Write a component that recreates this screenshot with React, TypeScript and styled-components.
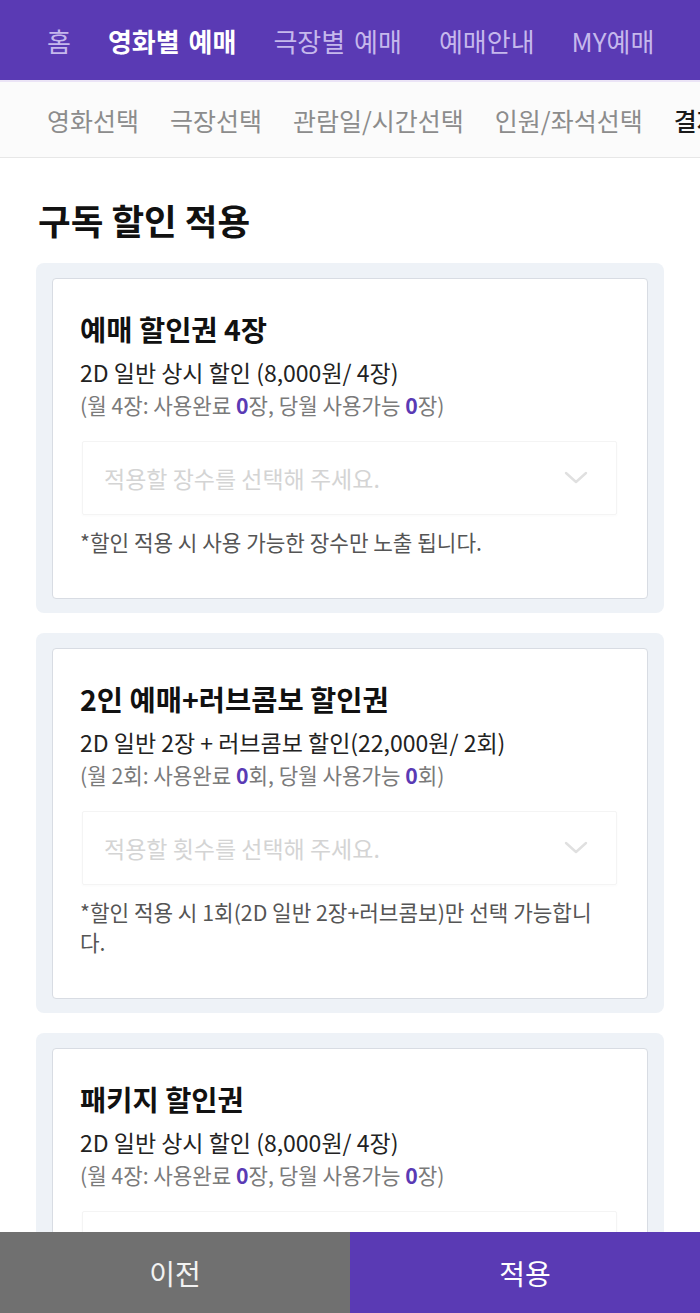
import React from "react";
import styled, { createGlobalStyle } from "styled-components";

const PURPLE = "#5a3ab4";

const GlobalStyle = createGlobalStyle`
  html, body {
    margin: 0;
    padding: 0;
    background: #ffffff;
    font-family: "Noto Sans CJK KR", "Noto Sans", sans-serif;
    color: #111;
  }
  * {
    box-sizing: border-box;
  }
`;

type Coupon = {
  title: string;
  desc: string;
  monthly: string;
  unit: string;
  placeholder: string;
  note: React.ReactNode;
};

const coupons: Coupon[] = [
  {
    title: "예매 할인권 4장",
    desc: "2D 일반 상시 할인 (8,000원/ 4장)",
    monthly: "월 4장",
    unit: "장",
    placeholder: "적용할 장수를 선택해 주세요.",
    note: "*할인 적용 시 사용 가능한 장수만 노출 됩니다.",
  },
  {
    title: "2인 예매+러브콤보 할인권",
    desc: "2D 일반 2장 + 러브콤보 할인(22,000원/ 2회)",
    monthly: "월 2회",
    unit: "회",
    placeholder: "적용할 횟수를 선택해 주세요.",
    note: (
      <>
        *할인 적용 시 1회(2D 일반 2장+러브콤보)만 선택 가능합니
        <br />
        다.
      </>
    ),
  },
  {
    title: "패키지 할인권",
    desc: "2D 일반 상시 할인 (8,000원/ 4장)",
    monthly: "월 4장",
    unit: "장",
    placeholder: "적용할 장수를 선택해 주세요.",
    note: "*할인 적용 시 사용 가능한 장수만 노출 됩니다.",
  },
];

const menus = ["홈", "영화별 예매", "극장별 예매", "예매안내", "MY예매"];
const steps = ["영화선택", "극장선택", "관람일/시간선택", "인원/좌석선택", "결제"];

function App() {
  return (
    <>
      <GlobalStyle />
      <TopNav>
        {menus.map((m) => (
          <NavItem key={m} $active={m === "영화별 예매"}>
            {m}
          </NavItem>
        ))}
      </TopNav>
      <StepBar>
        {steps.map((s) => (
          <Step key={s} $current={s === "결제"}>
            {s}
          </Step>
        ))}
      </StepBar>

      <Main>
        <PageTitle>구독 할인 적용</PageTitle>
        <CouponList>
          {coupons.map((c) => (
            <CouponBox key={c.title}>
              <Card>
                <CardTitle>{c.title}</CardTitle>
                <Desc>{c.desc}</Desc>
                <Usage>
                  ({c.monthly}: 사용완료 <Count>0</Count>
                  {c.unit}, 당월 사용가능 <Count>0</Count>
                  {c.unit})
                </Usage>
                <Select>
                  <Placeholder>{c.placeholder}</Placeholder>
                  <svg width="24" height="14" viewBox="0 0 24 14">
                    <polyline
                      points="2,2 12,11 22,2"
                      fill="none"
                      stroke="#e0e0e0"
                      strokeWidth="2.4"
                      strokeLinecap="round"
                      strokeLinejoin="round"
                    />
                  </svg>
                </Select>
                <Note>{c.note}</Note>
              </Card>
            </CouponBox>
          ))}
        </CouponList>
      </Main>

      <BottomBar>
        <BottomButton $primary={false}>이전</BottomButton>
        <BottomButton $primary>적용</BottomButton>
      </BottomBar>
    </>
  );
}

const TopNav = styled.nav`
  height: 80px;
  background: ${PURPLE};
  display: flex;
  align-items: center;
  gap: 37px;
  padding-left: 47px;
  white-space: nowrap;
  overflow: hidden;
  box-shadow: 0 2px 0 #ebe4f6;
  position: relative;
  z-index: 1;
`;

const NavItem = styled.span<{ $active: boolean }>`
  font-size: 26px;
  word-spacing: 3px;
  color: ${(p) => (p.$active ? "#ffffff" : "#c5b8ec")};
  font-weight: ${(p) => (p.$active ? 700 : 400)};
`;

const StepBar = styled.div`
  height: 78px;
  background: #fbfbfb;
  border-bottom: 1px solid #e7e7e7;
  display: flex;
  align-items: center;
  gap: 31px;
  padding: 2px 0 0 47px;
  white-space: nowrap;
  overflow: hidden;
`;

const Step = styled.span<{ $current: boolean }>`
  font-size: 25px;
  color: ${(p) => (p.$current ? "#1a1a1a" : "#8c8c8c")};
  font-weight: ${(p) => (p.$current ? 500 : 400)};
`;

const Main = styled.main`
  padding: 0 36px 120px;
`;

const PageTitle = styled.h1`
  margin: 40px 0 21px;
  padding-left: 2px;
  font-size: 35.5px;
  line-height: 44px;
  font-weight: 700;
  color: #111;
`;

const CouponList = styled.div`
  display: flex;
  flex-direction: column;
  gap: 20px;
`;

const CouponBox = styled.section`
  background: #eef2f7;
  border-radius: 8px;
  padding: 15px 16px 14px;
`;

const Card = styled.div`
  background: #ffffff;
  border: 1px solid #d8dce3;
  border-radius: 4px;
  padding: 32px 30px 41px 27px;
`;

const CardTitle = styled.h2`
  margin: 0;
  font-size: 28.5px;
  line-height: 36px;
  font-weight: 700;
  color: #111;
`;

const Desc = styled.p`
  margin: 10px 0 0;
  font-size: 23px;
  line-height: 30px;
  color: #222;
`;

const Usage = styled.p`
  margin: 4px 0 0;
  font-size: 21.2px;
  line-height: 28px;
  color: #7a7a7a;
`;

const Count = styled.b`
  color: ${PURPLE};
  font-weight: 700;
`;

const Select = styled.div`
  margin: 22px 0 0 2px;
  height: 74px;
  border: 1px solid #f4f4f4;
  border-radius: 2px;
  box-shadow: 0 1px 3px rgba(0, 0, 0, 0.025);
  display: flex;
  align-items: center;
  justify-content: space-between;
  padding: 0 28px 0 21px;
`;

const Placeholder = styled.span`
  font-size: 23px;
  color: #d4d4d4;
`;

const Note = styled.p`
  margin: 12px 0 0;
  font-size: 21.3px;
  line-height: 30px;
  color: #555;
  white-space: nowrap;
`;

const BottomBar = styled.footer`
  position: fixed;
  left: 0;
  right: 0;
  bottom: 0;
  height: 81px;
  display: grid;
  grid-template-columns: 1fr 1fr;
  z-index: 5;
`;

const BottomButton = styled.button<{ $primary: boolean }>`
  border: none;
  margin: 0;
  background: ${(p) => (p.$primary ? PURPLE : "#707070")};
  color: ${(p) => (p.$primary ? "#ffffff" : "#f2f2f2")};
  font-family: inherit;
  font-size: 28px;
  display: flex;
  align-items: center;
  justify-content: center;
  padding: 0;
`;

export default App;
